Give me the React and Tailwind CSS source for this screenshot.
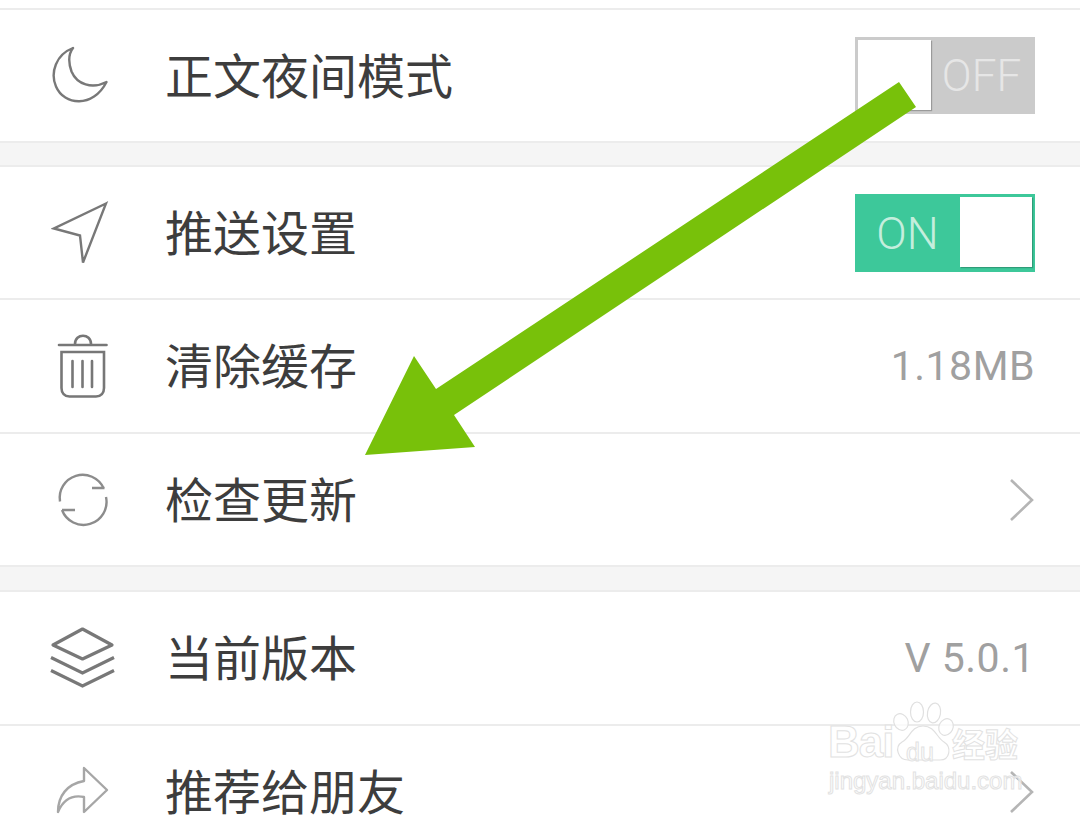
const font = { fontFamily: '"Noto Sans CJK SC", sans-serif' };

function Icon({ vb, children, ...rest }) {
  return (
    <svg width="62" height="66" viewBox={vb} fill="none" className="shrink-0" {...rest}>
      {children}
    </svg>
  );
}
function Moon() {
  return (
    <Icon vb="51 42.5 62 66" stroke="#787878" strokeWidth="2.4" strokeLinejoin="round">
      <path d="M73 47.500C56 54 50 72 56 86C64 105 93 108 106.500 81.500C92 89 77 84 71.500 71C68 61 68 54 73 47.500Z" />
    </Icon>
  );
}
function Send() {
  return (
    <Icon vb="51 199.5 62 66" stroke="#787878" strokeWidth="2.4" strokeLinejoin="miter">
      <path d="M106 203L54 228L80 235L83 262Z" />
    </Icon>
  );
}
function Trash() {
  return (
    <Icon vb="51 333 62 66" stroke="#777" strokeWidth="2.6" strokeLinecap="round">
      <path d="M59 345H106.500" />
      <path d="M75 344C75 333 91 333 91 344" />
      <path d="M61.500 352H104V388C104 393 101 396.500 96 396.500H69.500C64.500 396.500 61.500 393 61.500 388Z" />
      <path d="M72.500 361V387M82.500 361V387M92 361V387" />
    </Icon>
  );
}
function Refresh() {
  return (
    <Icon vb="51 467 62 66" stroke="#8c8c8c" strokeWidth="2.4">
      <path d="M60 501.500A23 23 0 0 1 103.500 488" />
      <path d="M106 497A23 23 0 0 1 62 510" />
      <path d="M92 488H104.500M62 510H75" />
    </Icon>
  );
}
function Layers() {
  return (
    <svg width="66" height="66" viewBox="49 626 66 66" fill="none" stroke="#787878" strokeWidth="3.200" className="shrink-0">
      <path d="M82.500 630L112 646L82.500 660L53 646Z" strokeLinejoin="round" />
      <path d="M51 658.500L82.500 674L114 658.500" />
      <path d="M51 671.500L82.500 687L114 671.500" />
    </svg>
  );
}
function Share() {
  return (
    <Icon vb="51 760 62 66" stroke="#a6a6a6" strokeWidth="2.400" strokeLinejoin="round">
      <path d="M84 769L107 791L84 813V798C74 796 64 799 58 813C58 797 67 785 84 782Z" />
    </Icon>
  );
}
function Chevron() {
  return (
    <svg width="26" height="44" viewBox="0 0 26 44" fill="none" stroke="#b5b5b5" strokeWidth="2.6" className="shrink-0">
      <path d="M2 2L23 22L2 42" />
    </svg>
  );
}

function Row({ icon, label, right, className = "" }) {
  return (
    <div className={`flex items-center bg-white shrink-0 ${className}`}>
      <div className="w-[164px] flex justify-center shrink-0">{icon}</div>
      <div className="flex-1 pl-[1px] text-[48px] leading-none text-[#3d3d3d] -mt-[6px]" style={font}>{label}</div>
      <div className="pr-[45px] flex items-center">{right}</div>
    </div>
  );
}
const Value = ({ children }) => (
  <span className="text-[41px] leading-none tracking-[0.5px] text-[#a0a0a0] font-['Roboto',sans-serif]">{children}</span>
);
const Line = () => <div className="h-[2px] bg-[#ececec] shrink-0" />;
const Gap = ({ h }) => <div className={`${h} bg-[#f5f5f5] shrink-0`} />;

export default function App() {
  return (
    <div className="relative w-[1080px] h-[815px] overflow-hidden bg-white flex flex-col">
      <div className="h-[8px] shrink-0" />
      <Line />
      <Row
        className="h-[131px]"
        icon={<Moon />}
        label="正文夜间模式"
        right={
          <div className="w-[180px] h-[77px] bg-[#cbcbcb] flex p-[3px]">
            <div className="w-[73px] h-[70px] bg-white shadow-[1px_1px_1px_#9a9a9a]" />
            <div className="flex-1 flex items-center justify-center text-[44px] leading-none text-[#e6e6e6] font-light font-['Roboto',sans-serif]">OFF</div>
          </div>
        }
      />
      <Line />
      <Gap h="h-[22px]" />
      <Line />
      <Row
        className="h-[131px]"
        icon={<Send />}
        label="推送设置"
        right={
          <div className="w-[180px] h-[78px] mt-[1px] bg-[#3dc89a] flex p-[3px]">
            <div className="flex-1 flex items-center justify-center text-[45px] leading-none text-[#c4eedd] font-light font-['Roboto',sans-serif] pr-[3px]">ON</div>
            <div className="w-[72px] h-[70px] bg-white shadow-[1px_1px_1px_#2f9c78]" />
          </div>
        }
      />
      <Line />
      <Row className="h-[132px]" icon={<Trash />} label="清除缓存" right={<Value>1.18MB</Value>} />
      <Line />
      <Row className="h-[131px]" icon={<Refresh />} label="检查更新" right={<Chevron />} />
      <Line />
      <Gap h="h-[23px]" />
      <Line />
      <Row className="h-[132px]" icon={<Layers />} label="当前版本" right={<Value>V 5.0.1</Value>} />
      <Line />
      <Row className="h-[88px] pt-[44px]" icon={<Share />} label="推荐给朋友" right={<Chevron />} />

      <svg className="absolute left-0 top-0 pointer-events-none" width="1080" height="815" viewBox="0 0 1080 815">
        <polygon fill="#78c10a" points="899,82 916,107 454,415 475,447 365,455 414,356 436,389" />
      </svg>

      <div className="absolute left-[828px] top-[698px] w-[200px] h-[105px] pointer-events-none">
        <svg className="absolute left-0 top-0" width="200" height="70" viewBox="0 0 200 70" fill="rgba(255,255,255,0.75)" stroke="#e0e0e0" strokeWidth="1.2">
          <ellipse cx="73" cy="24" rx="7" ry="8.500" transform="rotate(-25 73 24)" />
          <ellipse cx="89" cy="14" rx="6.500" ry="10" />
          <ellipse cx="106" cy="15" rx="6.500" ry="10" transform="rotate(10 106 15)" />
          <ellipse cx="118" cy="29" rx="7" ry="8.500" transform="rotate(25 118 29)" />
          <path d="M95 28C83 28 82 40 74 44C66 49 70 62 80 62H112C122 62 124 49 116 44C108 39 107 28 95 28Z" />
        </svg>
        <div className="absolute left-[0px] top-[20px] text-[44px] leading-[48px] tracking-[-1px] font-bold text-white/70 [-webkit-text-stroke:1px_#e2e2e2] font-['Liberation_Sans',sans-serif]">Bai</div>
        <div className="absolute left-[78px] top-[40px] text-[25px] leading-[28px] text-white/70 [-webkit-text-stroke:1px_#e2e2e2] font-['Liberation_Sans',sans-serif]">du</div>
        <div className="absolute left-[124px] top-[25px] text-[33px] leading-[40px] font-bold text-white/70 [-webkit-text-stroke:1px_#e2e2e2]" style={font}>经验</div>
        <div className="absolute left-[1px] top-[68px] text-[24px] leading-[30px] text-white/70 [-webkit-text-stroke:1px_#e2e2e2] font-['Liberation_Sans',sans-serif]">jingyan.baidu.com</div>
      </div>
    </div>
  );
}
